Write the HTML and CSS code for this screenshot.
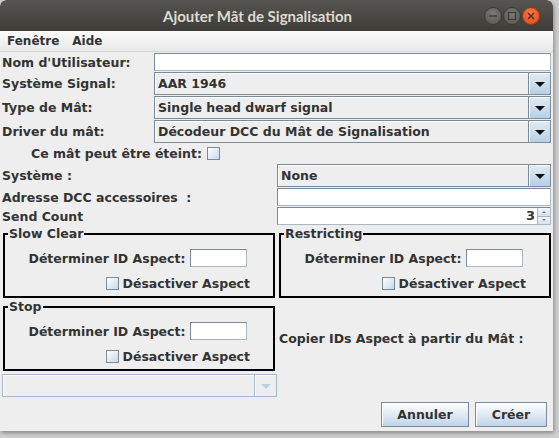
FILE: index.html
```html
<!DOCTYPE html>
<html lang="fr">
<head>
<meta charset="utf-8">
<title>Ajouter Mât de Signalisation</title>
<link rel="stylesheet" href="styles.css">
</head>
<body>
<div class="window">
  <div class="titlebar">
    <span class="title">Ajouter Mât de Signalisation</span>
    <div class="wbtns">
      <span class="wbtn"><svg width="10" height="10" viewBox="0 0 10 10"><line x1="1" y1="5" x2="9" y2="5" stroke="#3b3a36" stroke-width="1.4"/></svg></span>
      <span class="wbtn"><svg width="10" height="10" viewBox="0 0 10 10"><rect x="1.5" y="1.5" width="7" height="7" fill="none" stroke="#3b3a36" stroke-width="1.2"/></svg></span>
      <span class="wbtn close"><svg width="10" height="10" viewBox="0 0 10 10"><path d="M2 2L8 8M8 2L2 8" stroke="#5a2a14" stroke-width="1.5"/></svg></span>
    </div>
  </div>
  <div class="menubar"><span class="menu">Fenêtre</span><span class="menu">Aide</span></div>
  <div class="content">
    <div class="form-top">
      <label class="lbl">Nom d'Utilisateur:</label>
      <div class="tfield"></div>
      <label class="lbl">Système Signal:</label>
      <div class="combo"><span class="cval">AAR 1946</span><span class="carrow"><i class="tri"></i></span></div>
      <label class="lbl">Type de Mât:</label>
      <div class="combo"><span class="cval">Single head dwarf signal</span><span class="carrow"><i class="tri"></i></span></div>
      <label class="lbl">Driver du mât:</label>
      <div class="combo"><span class="cval">Décodeur DCC du Mât de Signalisation</span><span class="carrow"><i class="tri"></i></span></div>
    </div>
    <div class="check-row"><span class="lbl">Ce mât peut être éteint:</span><span class="cbox"></span></div>
    <div class="form-half">
      <label class="lbl">Système :</label>
      <div class="combo"><span class="cval">None</span><span class="carrow"><i class="tri"></i></span></div>
      <label class="lbl">Adresse DCC accessoires  :</label>
      <div class="tfield"></div>
      <label class="lbl">Send Count</label>
      <div class="spinner"><span class="sval">3</span><span class="sbtns"><span class="sbtn"><i class="up"></i></span><span class="sbtn"><i class="down"></i></span></span></div>
    </div>
    <div class="groups">
      <fieldset class="group">
        <legend>Slow Clear</legend>
        <div class="grow1"><span class="lbl">Déterminer ID Aspect:</span><span class="tfield small"></span></div>
        <div class="grow2"><span class="cbox"></span><span class="lbl">Désactiver Aspect</span></div>
      </fieldset>
      <fieldset class="group">
        <legend>Restricting</legend>
        <div class="grow1"><span class="lbl">Déterminer ID Aspect:</span><span class="tfield small"></span></div>
        <div class="grow2"><span class="cbox"></span><span class="lbl">Désactiver Aspect</span></div>
      </fieldset>
      <fieldset class="group">
        <legend>Stop</legend>
        <div class="grow1"><span class="lbl">Déterminer ID Aspect:</span><span class="tfield small"></span></div>
        <div class="grow2"><span class="cbox"></span><span class="lbl">Désactiver Aspect</span></div>
      </fieldset>
      <div class="copy-label"><span class="lbl">Copier IDs Aspect à partir du Mât :</span></div>
    </div>
    <div class="dis-row">
      <div class="combo disabled"><span class="cval"></span><span class="carrow"><i class="tri"></i></span></div>
    </div>
    <div class="buttons">
      <button class="btn annuler">Annuler</button>
      <button class="btn creer">Créer</button>
    </div>
  </div>
</div>
</body>
</html>
```

FILE: styles.css
```css
* { box-sizing: border-box; }
html, body { margin: 0; padding: 0; }
body {
  width: 559px;
  height: 438px;
  background: #cfcfcf;
  overflow: hidden;
  font-family: "DejaVu Sans", sans-serif;
  font-weight: bold;
  font-size: 12px;
  color: #333333;
}
.window {
  width: 553px;
  height: 431px;
  background: #eeeeee;
  border-radius: 6px 6px 0 0;
  box-shadow: 1px 2px 4px rgba(0,0,0,0.35);
  display: flex;
  flex-direction: column;
  overflow: hidden;
}
.titlebar {
  height: 31px;
  flex: none;
  background: linear-gradient(#57554f, #3d3c38);
  display: flex;
  align-items: center;
  padding: 0 8px 0 163px;
  border-radius: 6px 6px 0 0;
}
.title {
  font-family: "Lato", "DejaVu Sans", sans-serif;
  font-weight: bold;
  font-size: 15px;
  color: #dfdbd2;
  flex: 1;
  padding-top: 1px;
}
.wbtns { display: flex; gap: 1px; margin-right: 5px; }
.wbtn {
  width: 18px; height: 18px;
  border-radius: 50%;
  background: radial-gradient(circle at 50% 35%, #7a7973, #55544f);
  border: 1px solid #3a3935;
  display: flex; align-items: center; justify-content: center;
}
.wbtn.close {
  background: radial-gradient(circle at 50% 35%, #f57a4a, #e0481a);
  border-color: #9c3a14;
}
.menubar {
  height: 21px;
  flex: none;
  background: linear-gradient(#fbfbfb, #e9e9e9);
  border-bottom: 1px solid #d6d6d6;
  display: flex;
  align-items: center;
  padding-left: 7px;
  gap: 13px;
}
.content {
  flex: 1;
  display: flex;
  flex-direction: column;
  padding: 1px 2px 0 2px;
  font-size: 12.5px;
}
.lbl { white-space: pre; }
.form-top {
  display: grid;
  grid-template-columns: 152px 1fr;
  grid-template-rows: 18px 23px 23px 23px;
  row-gap: 1px;
  align-items: center;
}
.tfield {
  height: 18px;
  background: #ffffff;
  border: 1px solid #7a8a99;
  border-right-color: #aab7c3;
  border-bottom-color: #aab7c3;
}
.combo {
  height: 23px;
  border: 1px solid #7a8a99;
  background: #eeeeee;
  display: flex;
  box-shadow: inset 1px 1px 0 #ffffff;
}
.cval {
  flex: 1;
  padding-left: 3px;
  line-height: 21px;
  border-right: 1px solid #7a8a99;
}
.carrow {
  width: 21px;
  background: linear-gradient(#e2ebf4, #b9cfe4);
  display: flex;
  align-items: center;
  justify-content: center;
  box-shadow: inset 1px 1px 0 #ffffff;
}
.tri {
  width: 0; height: 0;
  border-left: 5px solid transparent;
  border-right: 5px solid transparent;
  border-top: 5px solid #111111;
  margin-top: 1px;
}
.combo.disabled { border-color: #a3b8cc; }
.combo.disabled .cval { border-right-color: #a3b8cc; }
.combo.disabled .carrow { background: #eeeeee; }
.combo.disabled .tri { border-top-color: #b8cfe5; }
.check-row {
  height: 21px;
  display: flex;
  align-items: center;
  padding-left: 29px;
  gap: 5px;
}
.cbox {
  width: 13px; height: 13px;
  border: 1px solid #7a8a99;
  background: linear-gradient(135deg, #ffffff, #c7d8ea);
  flex: none;
}
.form-half {
  display: grid;
  grid-template-columns: 275px 1fr;
  grid-template-rows: 23px 18px 18px;
  row-gap: 1px;
  align-items: center;
}
.spinner {
  height: 18px;
  background: #ffffff;
  border: 1px solid #7a8a99;
  border-right-color: #aab7c3;
  border-bottom-color: #aab7c3;
  display: flex;
}
.sval { flex: 1; text-align: right; line-height: 16px; padding-right: 2px; font-size: 13px; }
.sbtns { width: 13px; display: flex; flex-direction: column; border-left: 1px solid #aab7c3; }
.sbtn {
  flex: 1;
  background: linear-gradient(#f4f7fa, #d4e1ee);
  display: flex; align-items: center; justify-content: center;
}
.sbtn + .sbtn { border-top: 1px solid #aab7c3; }
.up, .down { width: 0; height: 0; border-left: 2px solid transparent; border-right: 2px solid transparent; }
.up { border-bottom: 2px solid #777; }
.down { border-top: 2px solid #777; }
.groups {
  display: grid;
  grid-template-columns: 272px 1fr;
  column-gap: 4px;
  row-gap: 2px;
  margin-top: 2px;
  padding-left: 1px;
}
.group {
  margin: 0;
  border: 2px solid #000000;
  padding: 8px 0 0 0;
  height: 71px;
  display: flex;
  flex-direction: column;
  min-width: 0;
}
.group legend {
  padding: 0 1px;
  margin-left: 3px;
  line-height: 14px;
}
.grow1 {
  display: flex;
  justify-content: center;
  align-items: center;
  gap: 5px;
  height: 18px;
  padding-right: 2px;
}
.tfield.small { width: 57px; display: block; }
.grow2 {
  display: flex;
  justify-content: flex-end;
  align-items: center;
  gap: 4px;
  padding-right: 23px;
  margin-top: 9px;
}
.copy-label {
  display: flex;
  align-items: center;
  padding-top: 6px;
}
.dis-row { margin-top: 3px; width: 275px; }
.buttons {
  display: flex;
  justify-content: flex-end;
  gap: 6px;
  padding-right: 4px;
  margin-top: 5px;
}
.btn {
  height: 25px;
  font-family: "DejaVu Sans", sans-serif;
  font-weight: bold;
  font-size: 12.5px;
  color: #333333;
  border: 1px solid #7a8a99;
  background: linear-gradient(#ffffff, #dde8f3 55%, #bfd3e7);
  box-shadow: inset 1px 1px 0 #ffffff;
  padding: 0;
}
.annuler { width: 88px; }
.creer { width: 72px; }
```
